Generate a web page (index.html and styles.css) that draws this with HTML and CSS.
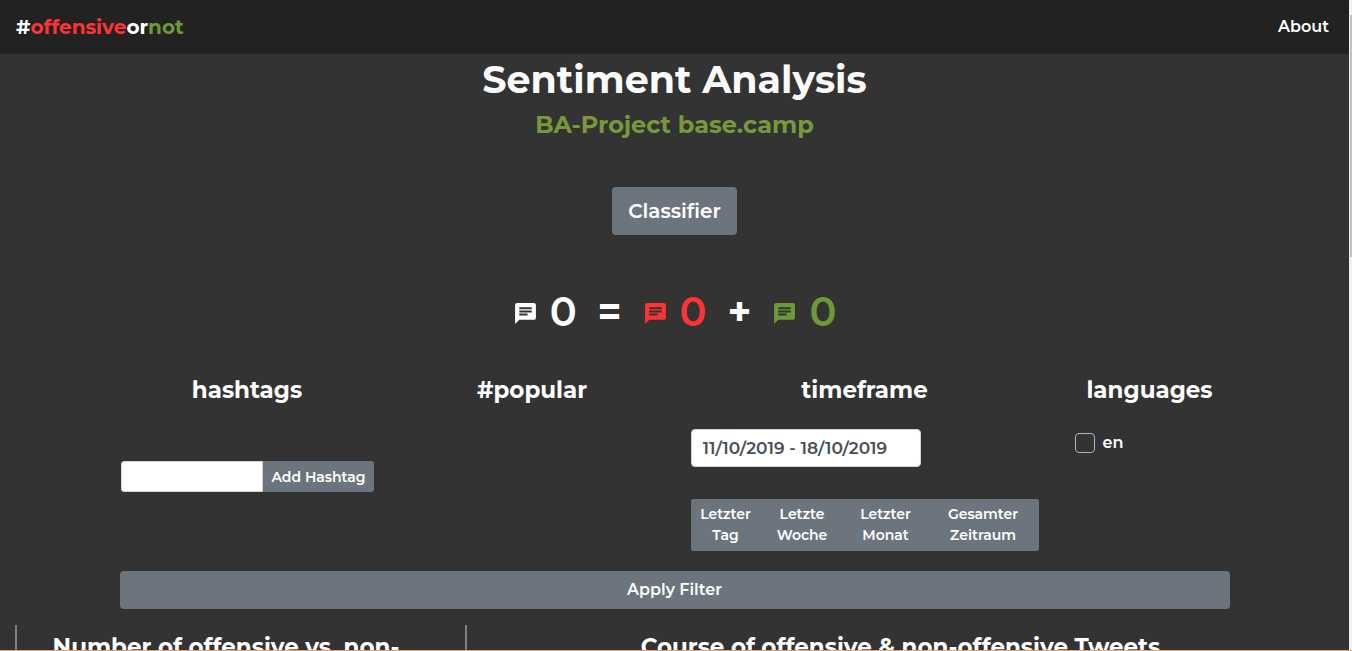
FILE: index.html
```html
<!DOCTYPE html>
<html lang="en">
<head>
<meta charset="utf-8">
<meta name="viewport" content="width=device-width, initial-scale=1">
<title>#offensiveornot</title>
<link rel="stylesheet" href="styles.css">
</head>
<body>
<svg class="sprite" aria-hidden="true"><symbol id="chat" viewBox="0 0 24 24"><path fill-rule="evenodd" d="M20 2H4c-1.100 0-2 .9-2 2v18l4-4h14c1.100 0 2-.9 2-2V4c0-1.100-.9-2-2-2zM6 6h12v2H6zM6 9h12v2H6zM6 12h8v2H6z"/></symbol></svg>
<div class="page">
  <nav class="navbar">
    <a class="brand" href="#">#<span class="red">offensive</span>or<span class="green">not</span></a>
    <a class="nav-link" href="#about">About</a>
  </nav>
  <main class="content">
    <header class="hero">
      <h1 class="title">Sentiment Analysis</h1>
      <h2 class="subtitle">BA-Project base.camp</h2>
      <button class="btn btn-large" type="button">Classifier</button>
    </header>
    <hr class="divider">
    <section class="totals" aria-label="Tweet totals">
      <span class="count"><svg class="icon"><use href="#chat"/></svg>0</span>
      <span class="sign">=</span>
      <span class="count red"><svg class="icon"><use href="#chat"/></svg>0</span>
      <span class="sign">+</span>
      <span class="count green"><svg class="icon"><use href="#chat"/></svg>0</span>
    </section>
    <form class="filters">
      <div class="filter">
        <h3 class="heading">hashtags</h3>
        <div class="hashtag-group">
          <input class="hashtag-input" type="text" aria-label="Hashtag">
          <button class="btn btn-add" type="button">Add Hashtag</button>
        </div>
      </div>
      <div class="filter"><h3 class="heading">#popular</h3></div>
      <div class="filter">
        <h3 class="heading">timeframe</h3>
        <input class="date-input" type="text" value="11/10/2019 - 18/10/2019" aria-label="Timeframe">
        <div class="range-group">
          <button class="btn btn-range" type="button">Letzter Tag</button>
          <button class="btn btn-range" type="button">Letzte Woche</button>
          <button class="btn btn-range" type="button">Letzter Monat</button>
          <button class="btn btn-range" type="button">Gesamter Zeitraum</button>
        </div>
      </div>
      <div class="filter">
        <h3 class="heading">languages</h3>
        <label class="check"><input class="check-box" type="checkbox">en</label>
      </div>
      <button class="btn btn-apply" type="button">Apply Filter</button>
    </form>
    <section class="charts">
      <div class="chart chart-narrow"><h3 class="heading">Number of offensive vs. non-offensive Tweets</h3></div>
      <div class="chart"><h3 class="heading">Course of offensive &amp; non-offensive Tweets</h3></div>
    </section>
  </main>
</div>
<div class="scrollbar" aria-hidden="true"><div class="thumb"></div></div>
<div class="edge" aria-hidden="true"></div>
</body>
</html>
```
FILE: styles.css
```css
* { box-sizing: border-box; }
body {
  margin: 0;
  height: 100vh;
  overflow: hidden;
  background: #333;
  color: #fff;
  font: 600 16px/24px Montserrat, Inter, sans-serif;
}
.sprite { display: none; }
.page { margin-right: 3px; }
h1, h2, h3 { margin: 0; font-weight: 700; text-align: center; }
a { color: #fff; text-decoration: none; }
.red { color: #ff3333; }
.green { color: #6b9b37; }

.navbar {
  display: flex;
  align-items: center;
  justify-content: space-between;
  height: 54px;
  padding: 0 20px 0 16px;
  background: #222;
}
.brand { font-size: 20px; font-weight: 700; }

.content { padding: 0 15px; }
.hero { display: flex; flex-direction: column; align-items: center; }
.title { padding-top: 2px; font-size: 38px; line-height: 48px; color: #fafafa; }
.subtitle { margin: 6px 0 48px; font-size: 24px; line-height: 29px; color: #78983a; }

.btn {
  border: 0;
  border-radius: 4px;
  background: #6c757d;
  color: #fff;
  font: inherit;
  cursor: pointer;
}
.btn-large { height: 48px; padding: 0 16px; font-size: 20px; }
.divider { margin: 16px 0 0; border: 0; border-top: 1px solid #2e2e2e; }

.totals {
  display: flex;
  align-items: center;
  justify-content: center;
  gap: 21px;
  height: 48px;
  margin-top: 36px;
  font-size: 40px;
  line-height: 48px;
}
.count { display: flex; align-items: center; gap: 12px; }
.icon { width: 25px; height: 25px; margin-top: 3px; fill: currentColor; }
.sign { font-weight: 700; }

.filters {
  display: grid;
  grid-template-columns: minmax(0, 3fr) minmax(0, 3fr) minmax(0, 4fr) minmax(0, 2fr);
  max-width: 1140px;
  margin: 40px auto 0;
}
.filter { padding: 0 16px; }
.heading { font-size: 23px; line-height: 29px; }
.hashtag-group { display: flex; margin-top: 56px; }
.hashtag-input, .date-input {
  min-width: 0;
  border: 1px solid #ced4da;
  background: #fff;
  color: #495057;
  font: inherit;
}
.hashtag-input { flex: 1; height: 31px; padding: 0 8px; border-radius: 3px 0 0 3px; }
.btn-add { height: 31px; padding: 0 8px; border-radius: 0 3px 3px 0; font-size: 14px; }
.date-input {
  display: block;
  width: 230px;
  height: 38px;
  margin-top: 24px;
  padding: 0 11px;
  border-radius: 4px;
  font-size: 17px;
}
.range-group {
  display: grid;
  grid-template-columns: 70fr 83fr 84fr 111fr;
  margin-top: 32px;
  overflow: hidden;
  border-radius: 3px;
  background: #6c757d;
}
.btn-range { padding: 5px 9px; border-radius: 0; font-size: 14px; line-height: 21px; }
.btn-range:last-child { padding: 5px 16px; }
.check { display: flex; align-items: center; gap: 8px; margin: 26px 0 0 4px; }
.check-box {
  appearance: none;
  width: 20px;
  height: 20px;
  margin: 0;
  border: 1px solid #adb5bd;
  border-radius: 4px;
}
.btn-apply { grid-column: 1 / -1; height: 38px; margin: 20px 15px 0; }

.charts { display: grid; grid-template-columns: 450fr 869fr; margin-top: 16px; }
.chart { padding-top: 8px; border-left: 2px solid #808080; }
.chart-narrow { padding-right: 30px; }

.scrollbar {
  position: fixed;
  inset: 0 0 0 auto;
  width: 3px;
  padding: 15px 0 0 1px;
  background: #f1f1f1;
}
.thumb { height: 242px; background: #c1c1c1; }
.edge { position: fixed; inset: auto 0 0 0; height: 1px; background: #d9a577; }
```
